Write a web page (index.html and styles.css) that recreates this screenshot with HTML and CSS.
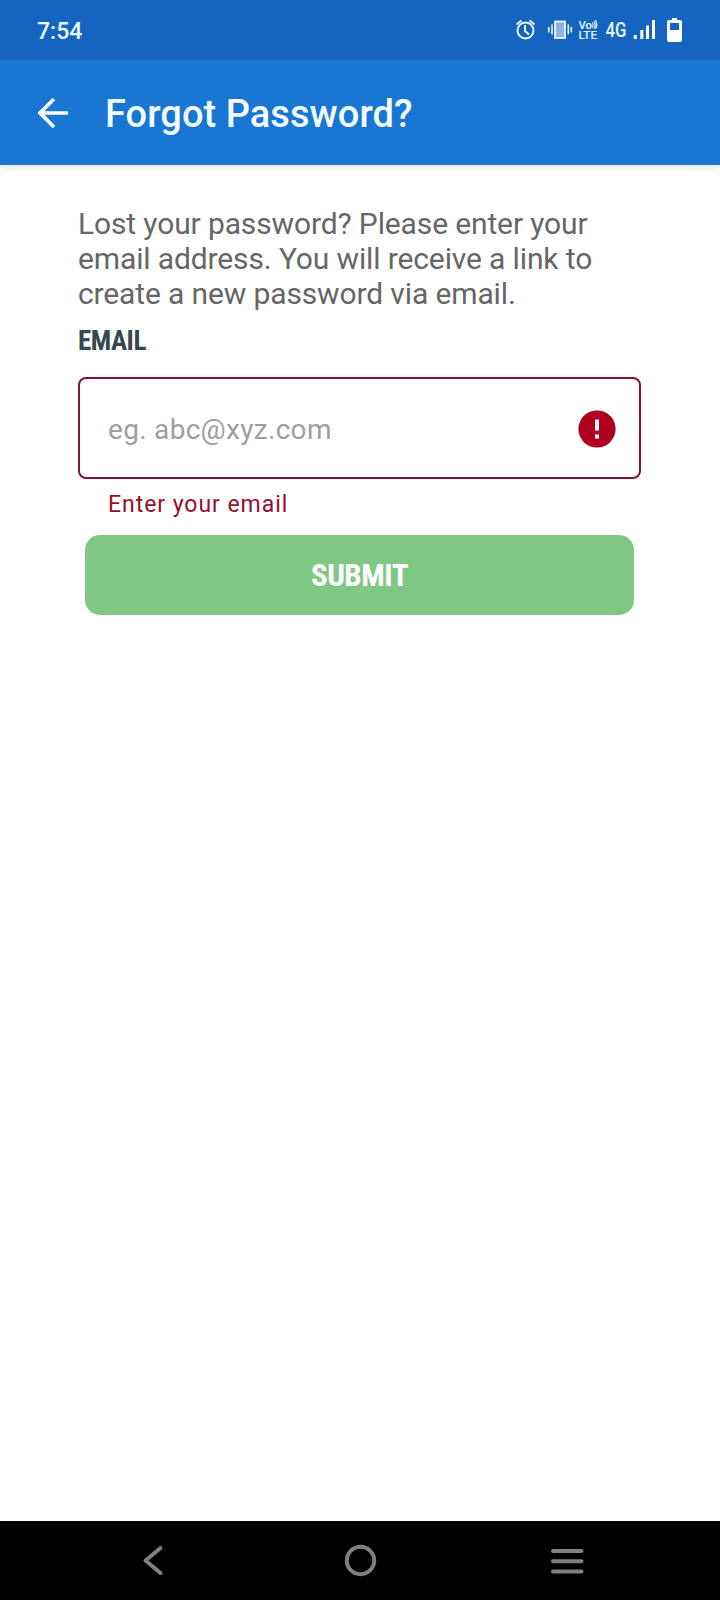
FILE: index.html
```html
<!DOCTYPE html>
<html lang="en">
<head>
<meta charset="utf-8">
<title>Forgot Password?</title>
<link rel="stylesheet" href="styles.css">
</head>
<body>
<div class="screen">
  <div class="status">
    <span class="clock">7:54</span>
    <svg class="status-icons" width="190" height="60" viewBox="0 0 190 60" fill="none" stroke="#e6f8ff">
      <g stroke-width="2">
        <circle cx="25.500" cy="30.500" r="8"/>
        <path d="M25 25v6l4 3.500M16.500 24.500l5-4M34.500 24.500l-5-4"/>
      </g>
      <rect x="55" y="21.500" width="10" height="16.500" fill="#8cb2e6" stroke-width="1.800"/>
      <path d="M52 24.500v10M48.800 27v5.500M68.300 24.500v10M71.300 27v5.500" stroke-width="1.600"/>
      <g fill="#e6f8ff" stroke="none">
        <text class="volte" x="78.500" y="28.500" textLength="13.500" lengthAdjust="spacingAndGlyphs">Vo</text>
        <text class="volte" x="78.500" y="39" textLength="18.500" lengthAdjust="spacingAndGlyphs">LTE</text>
        <text class="mobile" x="105.500" y="36.500" textLength="21" lengthAdjust="spacingAndGlyphs">4G</text>
      </g>
      <path d="M92.500 22.500q1.500 2.800 0 5.500M94 21q2.300 3.700 0 7.500M95.500 20q2.500 4.500 0 9" stroke-width="1.100"/>
      <path d="M135.300 39v-4M141.800 39v-9M147.500 39V25.500M153.500 39V20" stroke-width="3" stroke="#fff"/>
      <path d="M172 18h5v2h3q2 0 2 2v18q0 2-2 2h-11q-2 0-2-2V22q0-2 2-2h3zM170 23v7h9v-7z" fill="#fff" fill-rule="evenodd" stroke="none"/>
    </svg>
  </div>
  <header class="appbar">
    <svg class="back" width="32" height="32" viewBox="0 0 32 32" fill="none" stroke="#fff" stroke-width="3.700">
      <path d="M31 16H3M17 2L3 16L17 30"/>
    </svg>
    <h1 class="title">Forgot Password?</h1>
  </header>
  <main class="content">
    <p class="intro">Lost your password? Please enter your<br>email address. You will receive a link to<br>create a new password via email.</p>
    <div class="label">EMAIL</div>
    <div class="field">
      <span class="placeholder">eg. abc@xyz.com</span>
      <svg class="alert" width="38" height="38" viewBox="0 0 38 38"><circle cx="19" cy="19" r="18.600" fill="#b00020"/><path d="M17 9.500h4v11h-4zM17 24.500h4v4h-4z" fill="#fff"/></svg>
    </div>
    <div class="error">Enter your email</div>
    <div class="submit"><span class="submit-text">SUBMIT</span></div>
  </main>
  <nav class="navbar">
    <svg width="720" height="79" viewBox="0 0 720 79" fill="none" stroke="#808080" stroke-width="4" stroke-linecap="round" stroke-linejoin="round">
      <path d="M160.500 27L145.500 39.500L160.500 52"/>
      <circle cx="360.500" cy="39.500" r="13.700"/>
      <path d="M553 30h28.500M553 40.200h28.500M553 50.500h28.500"/>
    </svg>
  </nav>
</div>
</body>
</html>
```
FILE: styles.css
```css
* { box-sizing: border-box; }
body { margin: 0; background: #fff; font-family: Roboto, "Liberation Sans", sans-serif; }
.screen { width: 720px; height: 1600px; display: flex; flex-direction: column; }
.status { height: 60px; background: #1565c0; display: flex; justify-content: space-between; padding-left: 37px; padding-right: 30px; color: #e9faff; }
.clock { font-size: 23px; font-weight: 500; line-height: 63px; }
.volte { font: 500 11px Roboto, sans-serif; }
.mobile { font: 500 20px Roboto, sans-serif; }
.appbar { height: 105px; background: #1976d2; display: flex; align-items: center; padding-left: 37px; gap: 36px; border-bottom: 1px solid #3b71ae; box-shadow: 0 2px 6px rgba(25, 80, 130, 0.18); }
.back { margin-top: 1px; }
.title { margin: 0; padding-top: 4px; color: #f3fdff; font-size: 38px; font-weight: 500; line-height: 100px; letter-spacing: 0.05px; white-space: nowrap; }
.content { flex: 1; padding: 41px 79px 0 78px; }
.intro { margin: 0; font-size: 30px; line-height: 35px; letter-spacing: -0.13px; color: #666; white-space: nowrap; }
.label { font-family: "Roboto Condensed", Roboto, sans-serif; font-stretch: condensed; font-weight: 700; font-size: 27px; line-height: 32px; letter-spacing: -0.5px; margin-top: 14px; color: #37474f; }
.field { height: 102px; margin-top: 20px; border: 2px solid #7c1734; border-radius: 8px; display: flex; align-items: center; justify-content: space-between; padding: 0 23.5px 0 28px; }
.placeholder { font-size: 28px; color: #9e9e9e; letter-spacing: 0.3px; padding-top: 2px; }
.alert { margin-top: 1px; }
.error { margin: 11px 0 0 30px; font-size: 23px; line-height: 30px; letter-spacing: 0.95px; color: #960f2c; }
.submit { height: 80px; margin: 15px 7px 0; border-radius: 15px; background: #81c784; display: flex; align-items: center; justify-content: center; }
.submit-text { font-family: "Roboto Condensed", Roboto, sans-serif; font-stretch: condensed; font-weight: 700; font-size: 31px; letter-spacing: -0.5px; line-height: 40px; padding-top: 1px; color: #fff; }
.navbar { height: 79px; background: #000; }
```
